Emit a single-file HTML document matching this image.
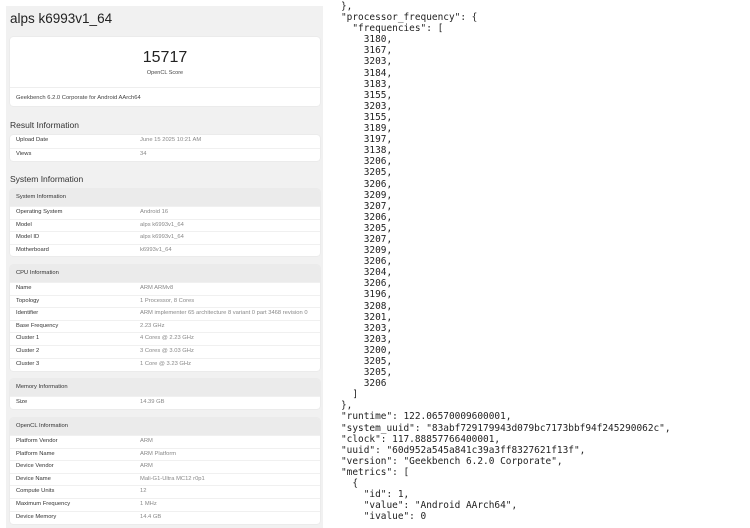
<!DOCTYPE html>
<html><head><meta charset="utf-8"><style>
body{margin:0;width:750px;height:528px;background:#fff;position:relative;overflow:hidden;font-family:"Liberation Sans",sans-serif;}
#left{position:absolute;left:6px;top:6px;width:317px;height:522px;background:#f1f1f1;}
.t{position:absolute;left:4px;top:5px;font-size:13.5px;color:#222;}
.card{position:absolute;left:4px;width:310px;background:#fff;border-radius:3px;box-shadow:0 0 1px #ccc;overflow:hidden;}
.h{position:absolute;left:4px;font-size:8.5px;color:#333;}
.row{height:12.6px;border-top:1px solid #f0f0f0;box-sizing:border-box;position:relative;font-size:5.8px;color:#333;line-height:11.6px;}
.row:first-child{border-top:none}
.row span{position:absolute;left:6px}
.row b{position:absolute;left:130px;font-weight:normal;color:#888}
.hd{height:17px;background:#ebebeb;font-size:5.8px;color:#333;line-height:17px;padding-left:6px;}
#right{position:absolute;left:341px;top:1px;font-family:"DejaVu Sans Mono",monospace;font-size:9.45px;line-height:11.09px;color:#222;white-space:pre;}
</style></head><body>
<div id="left">
<div class="t">alps k6993v1_64</div>
<div class="card" style="top:31px;height:69px">
<div style="position:absolute;top:12px;width:100%;text-align:center;font-size:16px;color:#222">15717</div>
<div style="position:absolute;top:33px;width:100%;text-align:center;font-size:5.5px;color:#444">OpenCL Score</div>
<div style="position:absolute;top:50px;width:100%;border-top:1px solid #eee"></div>
<div style="position:absolute;top:58px;left:6px;font-size:5.8px;color:#444">Geekbench 6.2.0 Corporate for Android AArch64</div>
</div>
<div class="h" style="top:114px">Result Information</div>
<div class="card" style="top:129px;height:26px">
<div class="row"><span>Upload Date</span><b>June 15 2025 10:21 AM</b></div>
<div class="row"><span>Views</span><b>34</b></div>
</div>
<div class="h" style="top:168px">System Information</div>
<div class="card" style="top:183px;height:67px">
<div class="hd">System Information</div>
<div class="row"><span>Operating System</span><b>Android 16</b></div>
<div class="row"><span>Model</span><b>alps k6993v1_64</b></div>
<div class="row"><span>Model ID</span><b>alps k6993v1_64</b></div>
<div class="row"><span>Motherboard</span><b>k6993v1_64</b></div>
</div>
<div class="card" style="top:259px;height:106px">
<div class="hd">CPU Information</div>
<div class="row"><span>Name</span><b>ARM ARMv8</b></div>
<div class="row"><span>Topology</span><b>1 Processor, 8 Cores</b></div>
<div class="row"><span>Identifier</span><b>ARM implementer 65 architecture 8 variant 0 part 3468 revision 0</b></div>
<div class="row"><span>Base Frequency</span><b>2.23 GHz</b></div>
<div class="row"><span>Cluster 1</span><b>4 Cores @ 2.23 GHz</b></div>
<div class="row"><span>Cluster 2</span><b>3 Cores @ 3.03 GHz</b></div>
<div class="row"><span>Cluster 3</span><b>1 Core @ 3.23 GHz</b></div>
</div>
<div class="card" style="top:373px;height:30px">
<div class="hd">Memory Information</div>
<div class="row"><span>Size</span><b>14.39 GB</b></div>
</div>
<div class="card" style="top:412px;height:106px">
<div class="hd">OpenCL Information</div>
<div class="row"><span>Platform Vendor</span><b>ARM</b></div>
<div class="row"><span>Platform Name</span><b>ARM Platform</b></div>
<div class="row"><span>Device Vendor</span><b>ARM</b></div>
<div class="row"><span>Device Name</span><b>Mali-G1-Ultra MC12 r0p1</b></div>
<div class="row"><span>Compute Units</span><b>12</b></div>
<div class="row"><span>Maximum Frequency</span><b>1 MHz</b></div>
<div class="row"><span>Device Memory</span><b>14.4 GB</b></div>
</div>
</div>
<div id="right">},
"processor_frequency": {
  "frequencies": [
    3180,
    3167,
    3203,
    3184,
    3183,
    3155,
    3203,
    3155,
    3189,
    3197,
    3138,
    3206,
    3205,
    3206,
    3209,
    3207,
    3206,
    3205,
    3207,
    3209,
    3206,
    3204,
    3206,
    3196,
    3208,
    3201,
    3203,
    3203,
    3200,
    3205,
    3205,
    3206
  ]
},
"runtime": 122.06570009600001,
"system_uuid": "83abf729179943d079bc7173bbf94f245290062c",
"clock": 117.88857766400001,
"uuid": "60d952a545a841c39a3ff8327621f13f",
"version": "Geekbench 6.2.0 Corporate",
"metrics": [
  {
    "id": 1,
    "value": "Android AArch64",
    "ivalue": 0</div>
</body></html>
